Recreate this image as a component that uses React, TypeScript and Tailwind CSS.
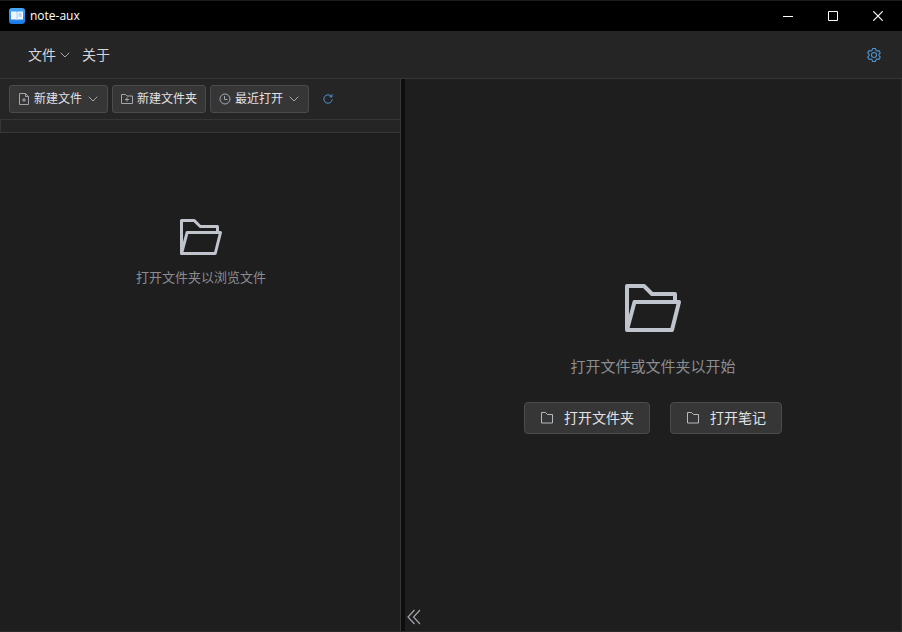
import { useState } from "react";
import type { ReactNode, SVGProps } from "react";

type IconProps = SVGProps<SVGSVGElement>;

function AppLogo() {
  return (
    <svg width="16" height="16" viewBox="0 0 16 16" fill="none" aria-hidden="true">
      <defs>
        <linearGradient id="logo-bg" x1="0" y1="0" x2="0" y2="1">
          <stop stopColor="#4aa8f8" />
          <stop offset="1" stopColor="#1a78e6" />
        </linearGradient>
      </defs>
      <rect width="16" height="16" rx="3" fill="url(#logo-bg)" />
      <path d="M2 3.500h5.400l.6.5.6-.5H14v8H8.600l-.6.5-.6-.5H2z" fill="#eef6ff" />
      <path d="M8 4v8" stroke="#a9cff7" />
      <path d="M9.500 6h3M9.500 8h3" stroke="#7fb6f0" />
    </svg>
  );
}

function ChevronDown(props: IconProps) {
  return (
    <svg width="10" height="6" viewBox="0 0 10 6" fill="none" stroke="currentColor" {...props}>
      <path d="M.7.7 5 5 9.3.7" />
    </svg>
  );
}

function FolderOpen(props: IconProps) {
  return (
    <svg viewBox="0 0 56 48" fill="none" stroke="currentColor" strokeWidth="4" strokeLinejoin="round" {...props}>
      <path d="M50 18v-8H27l-8-8H2v44" />
      <path d="M9.500 18H54l-7 28H2z" />
    </svg>
  );
}

function Folder(props: IconProps) {
  return (
    <svg width="14" height="12" viewBox="0 0 14 12" fill="none" stroke="currentColor" {...props}>
      <path d="M1.500.5h4L7.500 2.500h5v8.500h-11z" />
    </svg>
  );
}

function FolderAdd(props: IconProps) {
  return (
    <svg width="12" height="12" viewBox="0 0 12 12" fill="none" stroke="currentColor" {...props}>
      <path d="M.5 1.500h4L6 3h5.500v7.500H.5zM6 4.500v4M4 6.500h4" />
    </svg>
  );
}

function FileAdd(props: IconProps) {
  return (
    <svg width="12" height="12" viewBox="0 0 12 12" fill="none" stroke="currentColor" {...props}>
      <path d="M1.500.5h6l3 3v8h-9zM7.500.5v3h3M6 5v4M4 7h4" />
    </svg>
  );
}

function Clock(props: IconProps) {
  return (
    <svg width="12" height="12" viewBox="0 0 12 12" fill="none" stroke="currentColor" {...props}>
      <circle cx="6" cy="6" r="5" />
      <path d="M5.500 3v3.500h3" />
    </svg>
  );
}

function Refresh(props: IconProps) {
  return (
    <svg width="10" height="10" viewBox="0 0 10 10" fill="none" stroke="currentColor" {...props}>
      <path d="M9.200 5.500A4.200 4.200 0 1 1 8.400 2.500M9 .3v2.500H6.500" />
    </svg>
  );
}

function Gear(props: IconProps) {
  return (
    <svg width="16" height="16" viewBox="0 0 1024 1024" fill="none" stroke="currentColor" strokeWidth="68" {...props}>
      <path d="M600 96l46 126c22 10 42 22 62 36l122-26 84 146-86 94a330 330 0 0 1 0 80l86 94-84 146-122-26c-20 14-40 26-62 36l-46 126H424l-46-126c-22-10-42-22-62-36l-122 26-84-146 86-94a330 330 0 0 1 0-80l-86-94 84-146 122 26c20-14 40-26 62-36l46-126z" />
      <circle cx="512" cy="512" r="160" />
    </svg>
  );
}

function ToolButton({ icon, label, menu }: { icon: ReactNode; label: string; menu?: boolean }) {
  return (
    <button
      type="button"
      className="flex h-7 items-center gap-1 rounded-[3px] border border-[#4c4c4e] bg-[#363637] px-2 text-xs text-[#e0e2e6] hover:bg-[#404042]"
    >
      <span className="flex w-3 justify-center text-[#a3a6ad]">{icon}</span>
      {label}
      {menu && <ChevronDown className="mr-px ml-0.5 text-[#a3a6ad]" />}
    </button>
  );
}

function OpenButton({ label }: { label: string }) {
  return (
    <button
      type="button"
      className="flex h-8 items-center gap-2.5 rounded border border-[#4c4c4e] bg-[#363637] px-[15px] text-sm text-[#e0e2e6] hover:bg-[#404042]"
    >
      <Folder className="text-[#b5b8be]" />
      {label}
    </button>
  );
}

export default function App() {
  const [collapsed, setCollapsed] = useState(false);

  return (
    <div className="flex h-screen flex-col overflow-hidden border-b border-[#2a2a2b] bg-[#1e1e1e] font-['Open_Sans','Noto_Sans_CJK_SC',sans-serif] text-[#d4d6da]">
      {/* Title bar */}
      <header className="flex h-[31px] shrink-0 items-center border-t border-[#1c1c1c] bg-black pr-px pl-[9px] text-white">
        <AppLogo />
        <h1 className="ml-[5px] flex-1 text-xs">note-aux</h1>
        <button type="button" aria-label="最小化" className="flex h-full w-[45px] items-center justify-center hover:bg-white/10">
          <svg width="10" height="10" viewBox="0 0 10 10" stroke="currentColor">
            <path d="M0 5.500h10" />
          </svg>
        </button>
        <button type="button" aria-label="最大化" className="flex h-full w-[45px] items-center justify-center hover:bg-white/10">
          <svg width="10" height="10" viewBox="0 0 10 10" fill="none" stroke="currentColor">
            <path d="M.5.5h9v9h-9z" />
          </svg>
        </button>
        <button type="button" aria-label="关闭" className="flex h-full w-[46px] items-center justify-center hover:bg-red-600">
          <svg width="10" height="10" viewBox="0 0 10 10" stroke="currentColor" strokeWidth="1.200">
            <path d="M.3.3l9.400 9.400M9.700.3.3 9.700" />
          </svg>
        </button>
      </header>

      {/* Menu */}
      <nav className="flex h-12 shrink-0 items-center gap-3 border-b border-[#363637] bg-[#252526] pr-5 pl-7 text-sm">
        <button type="button" className="flex items-center gap-1">
          文件
          <ChevronDown className="text-[#a3a6ad]" />
        </button>
        <button type="button">关于</button>
        <button type="button" aria-label="设置" className="ml-auto text-[#4f94d4]">
          <Gear />
        </button>
      </nav>

      <main className="flex min-h-0 flex-1">
        {!collapsed && (
          <aside className="flex w-[401px] shrink-0 flex-col border-r border-[#363637]">
            <div className="flex h-10 shrink-0 items-center gap-1 bg-[#252526] pl-[9px]">
              <ToolButton icon={<FileAdd />} label="新建文件" menu />
              <ToolButton icon={<FolderAdd />} label="新建文件夹" />
              <ToolButton icon={<Clock />} label="最近打开" menu />
              <button type="button" aria-label="刷新" className="ml-[10px] text-[#4f94d4]">
                <Refresh />
              </button>
            </div>
            <div className="h-3.5 shrink-0 border border-r-0 border-[#363637] bg-[#252526]" />
            <div className="flex flex-col items-center pt-[86px] pl-0.5">
              <FolderOpen className="h-9 w-[42px] text-[#c0c4cc]" />
              <p className="mt-3 text-[13px] leading-5 text-[#8b8d91]">打开文件夹以浏览文件</p>
            </div>
          </aside>
        )}

        <div className="w-1 shrink-0 cursor-col-resize bg-[#0e0e0e]" />

        <section className="flex min-w-0 flex-1 flex-col border-r border-[#2a2a2b]">
          <div className="flex flex-1 flex-col items-center justify-center pt-9">
            <FolderOpen className="h-12 w-14 text-[#c0c4cc]" />
            <p className="mt-[22px] text-[15px] leading-6 text-[#8b8d91]">打开文件或文件夹以开始</p>
            <div className="mt-6 flex gap-5">
              <OpenButton label="打开文件夹" />
              <OpenButton label="打开笔记" />
            </div>
          </div>
          <button
            type="button"
            aria-label="折叠侧栏"
            className="flex h-7 w-[18px] items-center justify-center text-[#a3a6ad]"
            onClick={() => setCollapsed(!collapsed)}
          >
            <svg width="14" height="16" viewBox="0 0 14 16" fill="none" stroke="currentColor" strokeWidth="1.200">
              <path d="M7.500 1 1 8l6.500 7M13 1 6.500 8l6.500 7" />
            </svg>
          </button>
        </section>
      </main>
    </div>
  );
}
